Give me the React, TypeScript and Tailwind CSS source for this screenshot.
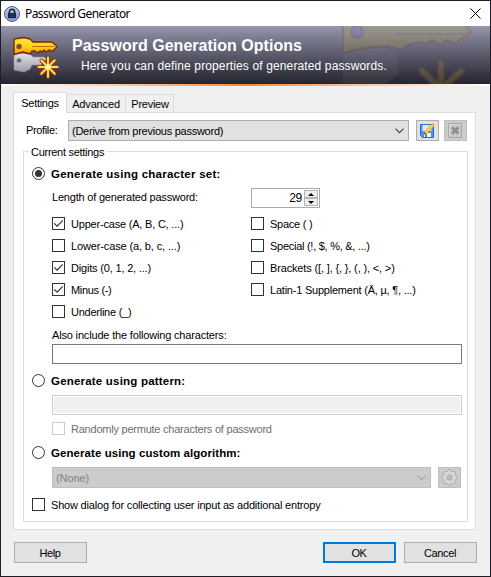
import type { ReactNode } from 'react';
import clsx from 'clsx';

const leftSets = [
  { label: 'Upper-case (A, B, C, ...)', checked: true, tracking: 'tracking-[-0.2px]' },
  { label: 'Lower-case (a, b, c, ...)', checked: false, tracking: 'tracking-[-0.13px]' },
  { label: 'Digits (0, 1, 2, ...)', checked: true, tracking: 'tracking-[-0.18px]' },
  { label: 'Minus (-)', checked: true, tracking: 'tracking-[-0.33px]' },
  { label: 'Underline (_)', checked: false, tracking: 'tracking-[-0.25px]' },
];

const rightSets = [
  { label: 'Space ( )', checked: false, tracking: 'tracking-[-0.25px]' },
  { label: 'Special (!, $, %, &, ...)', checked: false, tracking: 'tracking-[-0.27px]' },
  { label: 'Brackets ([, ], {, }, (, ), <, >)', checked: false, tracking: 'tracking-[-0.15px]' },
  { label: 'Latin-1 Supplement (Ä, µ, ¶, ...)', checked: false, tracking: 'tracking-[-0.22px]' },
];

function Checkbox({ label, checked = false, disabled = false, tracking }: {
  label: string;
  checked?: boolean;
  disabled?: boolean;
  tracking: string;
}) {
  return (
    <div className="flex h-[13px] items-center gap-[6px]">
      <span className={clsx('flex size-[13px] shrink-0 border bg-white', disabled ? 'border-[#cccccc]' : 'border-[#333333]')}>
        {checked ? (
          <svg width="11" height="11" viewBox="0 0 11 11" fill="none" stroke="#333" strokeWidth="1.2">
            <path d="M1.3 5.4 4.1 8.2 9.8 2.4" />
          </svg>
        ) : null}
      </span>
      <span className={clsx('pt-[2px]', tracking, disabled && 'text-[#6d6d6d]')}>{label}</span>
    </div>
  );
}

function Radio({ label, checked = false, tracking }: { label: string; checked?: boolean; tracking: string }) {
  return (
    <div className="ml-[8px] flex h-[13px] items-center gap-[6px]">
      <svg width="13" height="13" viewBox="0 0 13 13" className="shrink-0">
        <circle cx="6.5" cy="6.5" r="6" fill="#fff" stroke="#333" />
        {checked ? <circle cx="6.5" cy="6.5" r="3.5" fill="#333" /> : null}
      </svg>
      <span className={clsx('pt-[2px] text-[11.5px] font-bold', tracking)}>{label}</span>
    </div>
  );
}

function Chevron({ color }: { color: string }) {
  return (
    <svg width="9" height="6" viewBox="0 0 9 6" fill="none" stroke={color} strokeWidth="1.1">
      <path d="M.5.7 4.5 4.7 8.5.7" />
    </svg>
  );
}

function Button({ children, primary = false }: { children: ReactNode; primary?: boolean }) {
  return (
    <button
      className={clsx(
        'flex h-[21px] w-[73px] items-center justify-center bg-[#e1e1e1] pt-[2px] pr-px tracking-[-0.35px]',
        primary ? 'border-2 border-[#0078d7]' : 'border border-[#adadad]',
      )}
    >
      {children}
    </button>
  );
}

function LockIcon() {
  return (
    <svg width="16" height="16" viewBox="0 0 16 16">
      <defs>
        <linearGradient id="lock" x1="0" y1="0" x2="0" y2="1">
          <stop offset="0" stopColor="#c9d6f2" />
          <stop offset="1" stopColor="#5f83d8" />
        </linearGradient>
      </defs>
      <circle cx="8" cy="8" r="7.4" fill="url(#lock)" stroke="#4a4a50" />
      <circle cx="8" cy="8" r="6.4" fill="none" stroke="#b9c7ea" strokeWidth=".7" />
      <path d="M5.4 7.5V5.7a2.6 2.4 0 0 1 5.2 0v1.8" fill="none" stroke="#17203c" strokeWidth="1.5" />
      <path d="M4 7h8v5H4z" fill="#17203c" />
      <path d="M5 8.5h6M5 10.3h6" stroke="#46527a" strokeWidth=".6" />
    </svg>
  );
}

function Keys({ className }: { className?: string }) {
  return (
    <svg width="48" height="44" viewBox="0 0 48 44" className={className}>
      <defs>
        <linearGradient id="gold" x1="0" y1="0" x2="0" y2="1">
          <stop offset="0" stopColor="#ffe53d" />
          <stop offset=".5" stopColor="#ffd416" />
          <stop offset="1" stopColor="#f79b00" />
        </linearGradient>
        <linearGradient id="silver" x1="0" y1="0" x2="0" y2="1">
          <stop offset="0" stopColor="#e4e5e9" />
          <stop offset="1" stopColor="#9b9ca6" />
        </linearGradient>
      </defs>
      <path d="M2 18 7 17 18 18 21 21H32L35 24H31L29 29H20L18 33 12 36 2 34Z" fill="url(#silver)" stroke="#8e8f9a" strokeWidth=".7" />
      <circle cx="7" cy="24.5" r="2.5" fill="#64666f" stroke="#b4b5bd" />
      <path d="M2 3 12 1.5 18 3 21 6H40L45 10.5 41 15H39L37 14 34 16 32 14 30 16 28 15 26 17 23 15H20L18 18 11 16 2 18.5Z" fill="url(#gold)" stroke="#7b2410" strokeWidth="1.4" strokeLinejoin="round" />
      <path d="M20 10.5H42" stroke="#b8730c" strokeWidth="1" />
      <circle cx="7" cy="10.5" r="2.3" fill="#5d5264" stroke="#8b4a14" />
      <g stroke="#a73912" strokeWidth="3.8" strokeLinecap="round">
        <path d="M36 21.5V41M26.5 31H45.5M29.3 24.3 42.7 37.7M42.7 24.3 29.3 37.7" />
      </g>
      <g stroke="#ffe052" strokeWidth="2" strokeLinecap="round">
        <path d="M36 21.5V41M26.5 31H45.5M29.3 24.3 42.7 37.7M42.7 24.3 29.3 37.7" />
      </g>
      <circle cx="36" cy="31" r="2.5" fill="#fff6b5" />
    </svg>
  );
}

function BannerGhost() {
  return (
    <svg width="150" height="58" viewBox="0 0 150 58" className="absolute top-0 right-0">
      <path d="M3 28 24 23 45 22 58 28V48L46 58H3Z" fill="#9c9ca6" opacity=".1" />
      <g opacity=".24" strokeLinejoin="round">
        <path d="M3 -2V27L24 22 47 20 61 24 68 19 79 16 87 18 92 14 100 19 107 14 115 18 121 13 131 6 125 -2Z" fill="#b6a438" stroke="#8e4545" strokeWidth="2" />
        <circle cx="17" cy="6" r="6" fill="#7776c0" stroke="#704d77" strokeWidth="2" />
        <path d="M56 8H124" stroke="#8e7545" strokeWidth="2" />
      </g>
      <g opacity=".24">
        <path d="M101 37V76M101 63 82 45M101 63 121 45" stroke="#8e4545" strokeWidth="9" strokeLinecap="round" />
        <path d="M101 37V76M101 63 82 45M101 63 121 45" stroke="#b6a438" strokeWidth="5" strokeLinecap="round" />
      </g>
    </svg>
  );
}

function SaveIcon() {
  return (
    <svg width="17" height="17" viewBox="0 0 17 17">
      <path d="M1.5 2.5h13v13h-11l-2-2z" fill="#4f8ff0" stroke="#3366c8" />
      <path d="M3.5 3h9v6h-9z" fill="#dcedff" />
      <path d="M5 11h7v4H5z" fill="#f4f7fc" />
      <path d="M6 12h2v3H6z" fill="#5d86d4" />
      <path d="M5 12.3 6 9.2 13 1.8 15.2 3.8 8.2 11.2Z" fill="#ffd642" stroke="#b98224" strokeWidth=".6" />
      <path d="M12.4 2.3 13.5 1.2 15.8 3.3 14.7 4.4Z" fill="#e99a68" />
      <path d="M5 12.3 5.6 10.4 6.9 11.7Z" fill="#382e38" />
    </svg>
  );
}

function DeleteIcon() {
  return (
    <svg width="15" height="15" viewBox="0 0 15 15" fill="none">
      <path d="M.5.5h13v14H.5z" fill="#c6c6c6" stroke="#a6a6a6" />
      <path d="M1.5 13.5v-12h11" stroke="#dddddd" />
      <path d="m4 4.5 6.3 6M10.3 4.5l-6.3 6" stroke="#8c8c8c" strokeWidth="2.8" />
    </svg>
  );
}

function GearIcon() {
  return (
    <svg width="17" height="17" viewBox="0 0 17 17">
      <g fill="#d9d9d9" stroke="#a4a4a4" strokeWidth=".9">
        <circle cx="8.5" cy="2.6" r="1.9" />
        <circle cx="12.7" cy="4.3" r="1.9" />
        <circle cx="14.4" cy="8.5" r="1.9" />
        <circle cx="12.7" cy="12.7" r="1.9" />
        <circle cx="8.5" cy="14.4" r="1.9" />
        <circle cx="4.3" cy="12.7" r="1.9" />
        <circle cx="2.6" cy="8.5" r="1.9" />
        <circle cx="4.3" cy="4.3" r="1.9" />
      </g>
      <circle cx="8.5" cy="8.5" r="6" fill="#d9d9d9" />
      <circle cx="8.5" cy="8.5" r="3.2" fill="#c8c8c8" stroke="#bcbcbc" strokeWidth=".6" />
      <circle cx="8.5" cy="8.5" r="1.8" fill="#d2d2d2" stroke="#9a9a9a" />
    </svg>
  );
}

function TitleBar() {
  return (
    <div className="flex h-[25px] items-center bg-white pl-[3px]">
      <LockIcon />
      <span className="ml-[5px] font-['Noto_Sans',sans-serif] text-[12px] tracking-[-0.56px]">Password Generator</span>
      <svg width="11" height="11" viewBox="0 0 11 11" className="mr-[9px] ml-auto" stroke="#000" strokeWidth="1">
        <path d="m.5.5 10 10M10.5.5.5 10.5" />
      </svg>
    </div>
  );
}

function Banner() {
  return (
    <>
      <div className="relative flex h-[58px] overflow-hidden bg-linear-to-b from-[#9696ad] to-[#252530] text-white">
        <BannerGhost />
        <Keys className="mt-[10px] ml-[11px] shrink-0" />
        <div className="relative ml-[12px] whitespace-nowrap">
          <div className="mt-[10px] text-[16px] leading-[20px] font-bold tracking-[0.02px]">Password Generation Options</div>
          <div className="mt-[2px] ml-[9px] text-[12px] leading-[16px] tracking-[0.13px]">
            Here you can define properties of generated passwords.
          </div>
        </div>
      </div>
      <div className="h-[2px] bg-linear-to-r from-white via-[#ff8719] to-white" />
    </>
  );
}

function TabStrip() {
  return (
    <div className="relative z-10 flex h-[20px] items-end">
      <div className="-mb-px flex h-[21px] w-[54px] items-center justify-center border border-b-0 border-[#dcdcdc] bg-white pt-px tracking-[-0.3px]">
        Settings
      </div>
      <div className="flex h-[18px] w-[59px] items-center justify-center border-t border-r border-[#dcdcdc] pt-[2px] tracking-[-0.15px]">
        Advanced
      </div>
      <div className="flex h-[18px] w-[48px] items-center justify-center border-t border-r border-[#dcdcdc] pt-[2px] pl-px tracking-[-0.25px]">
        Preview
      </div>
    </div>
  );
}

function Spinner() {
  return (
    <div className="flex h-[20px] w-[69px] items-center justify-end border border-[#ababab] bg-white p-px">
      <span className="mr-[2px] text-[12px] tracking-[-0.3px]">29</span>
      <div className="flex h-[16px] w-[14px] flex-col">
        {['M4 1 1 4h6z', 'M4 4 1 1h6z'].map((d) => (
          <span key={d} className="flex h-[8px] items-center justify-center border border-[#b4b4b4] bg-[#eeeeee]">
            <svg width="8" height="5" viewBox="0 0 8 5">
              <path d={d} fill="#000" />
            </svg>
          </span>
        ))}
      </div>
    </div>
  );
}

function CurrentSettings() {
  return (
    <fieldset className="relative mt-[10px] ml-[9px] h-[371px] w-[445px] border border-[#dcdcdc] pt-[15px]">
      <span className="absolute top-[-6px] left-[5px] bg-white px-[2px] tracking-[-0.28px]">Current settings</span>
      <Radio label="Generate using character set:" checked tracking="tracking-[0.25px]" />
      <div className="mt-[8px] ml-[28px] flex h-[20px] items-center">
        <span className="w-[199px] pb-[2px] tracking-[-0.2px]">Length of generated password:</span>
        <Spinner />
      </div>
      <div className="mt-[9px] ml-[28px] flex h-[101px]">
        <div className="flex w-[199px] flex-col gap-[9px]">
          {leftSets.map((set) => (
            <Checkbox key={set.label} {...set} />
          ))}
        </div>
        <div className="flex flex-col gap-[9px]">
          {rightSets.map((set) => (
            <Checkbox key={set.label} {...set} />
          ))}
        </div>
      </div>
      <div className="mt-[10px] ml-[28px] leading-[14px] tracking-[-0.17px]">Also include the following characters:</div>
      <div className="mt-[2px] ml-[28px] h-[20px] w-[410px] border border-[#7a7a7a]" />
      <div className="mt-[10px]">
        <Radio label="Generate using pattern:" tracking="tracking-[0.2px]" />
      </div>
      <div className="mt-[8px] ml-[28px] h-[20px] w-[410px] border border-[#cccccc] p-px">
        <div className="h-full bg-[#f0f0f0]" />
      </div>
      <div className="mt-[7px] ml-[28px]">
        <Checkbox label="Randomly permute characters of password" disabled tracking="tracking-[-0.23px]" />
      </div>
      <div className="mt-[11px]">
        <Radio label="Generate using custom algorithm:" tracking="tracking-[0.07px]" />
      </div>
      <div className="mt-[8px] ml-[28px] flex gap-[7px]">
        <div className="flex h-[21px] w-[379px] items-center justify-between border border-[#bfbfbf] bg-[#cccccc] pr-[4px] pl-[3px] text-[#838383]">
          <span className="pt-[2px] tracking-[-0.1px]">(None)</span>
          <Chevron color="#a0a0a0" />
        </div>
        <div className="flex h-[21px] w-[23px] items-center justify-center border border-[#bfbfbf] bg-[#cccccc]">
          <GearIcon />
        </div>
      </div>
      <div className="mt-[10px] ml-[8px]">
        <Checkbox label="Show dialog for collecting user input as additional entropy" tracking="tracking-[-0.19px]" />
      </div>
    </fieldset>
  );
}

export default function App() {
  return (
    <main className="h-[577px] w-[491px] overflow-hidden border border-[#1e1e29] bg-[#f0f0f0] font-['Liberation_Sans',Arial,sans-serif] text-[11px] leading-[13px] whitespace-nowrap text-black">
      <TitleBar />
      <Banner />
      <div className="mt-[6px] ml-[12px] w-[463px]">
        <TabStrip />
        <div className="h-[418px] border border-[#dcdcdc] bg-white pt-[7px]">
          <div className="flex h-[21px] items-center">
            <span className="ml-[12px] w-[42px] tracking-[-0.35px]">Profile:</span>
            <div className="flex h-[21px] w-[341px] items-center justify-between border border-[#adadad] bg-[#e1e1e1] pr-[4px] pl-[3px]">
              <span className="pt-[2px] tracking-[-0.25px]">(Derive from previous password)</span>
              <Chevron color="#404040" />
            </div>
            <div className="ml-[7px] flex h-[21px] w-[23px] items-center justify-center border border-[#adadad] bg-[#e1e1e1]">
              <SaveIcon />
            </div>
            <div className="ml-[5px] flex h-[21px] w-[23px] items-center justify-center border border-[#bfbfbf] bg-[#cccccc]">
              <DeleteIcon />
            </div>
          </div>
          <CurrentSettings />
        </div>
      </div>
      <footer className="mt-[12px] ml-[13px] flex">
        <Button>Help</Button>
        <div className="ml-[236px] flex gap-[8px]">
          <Button primary>OK</Button>
          <Button>Cancel</Button>
        </div>
      </footer>
    </main>
  );
}
